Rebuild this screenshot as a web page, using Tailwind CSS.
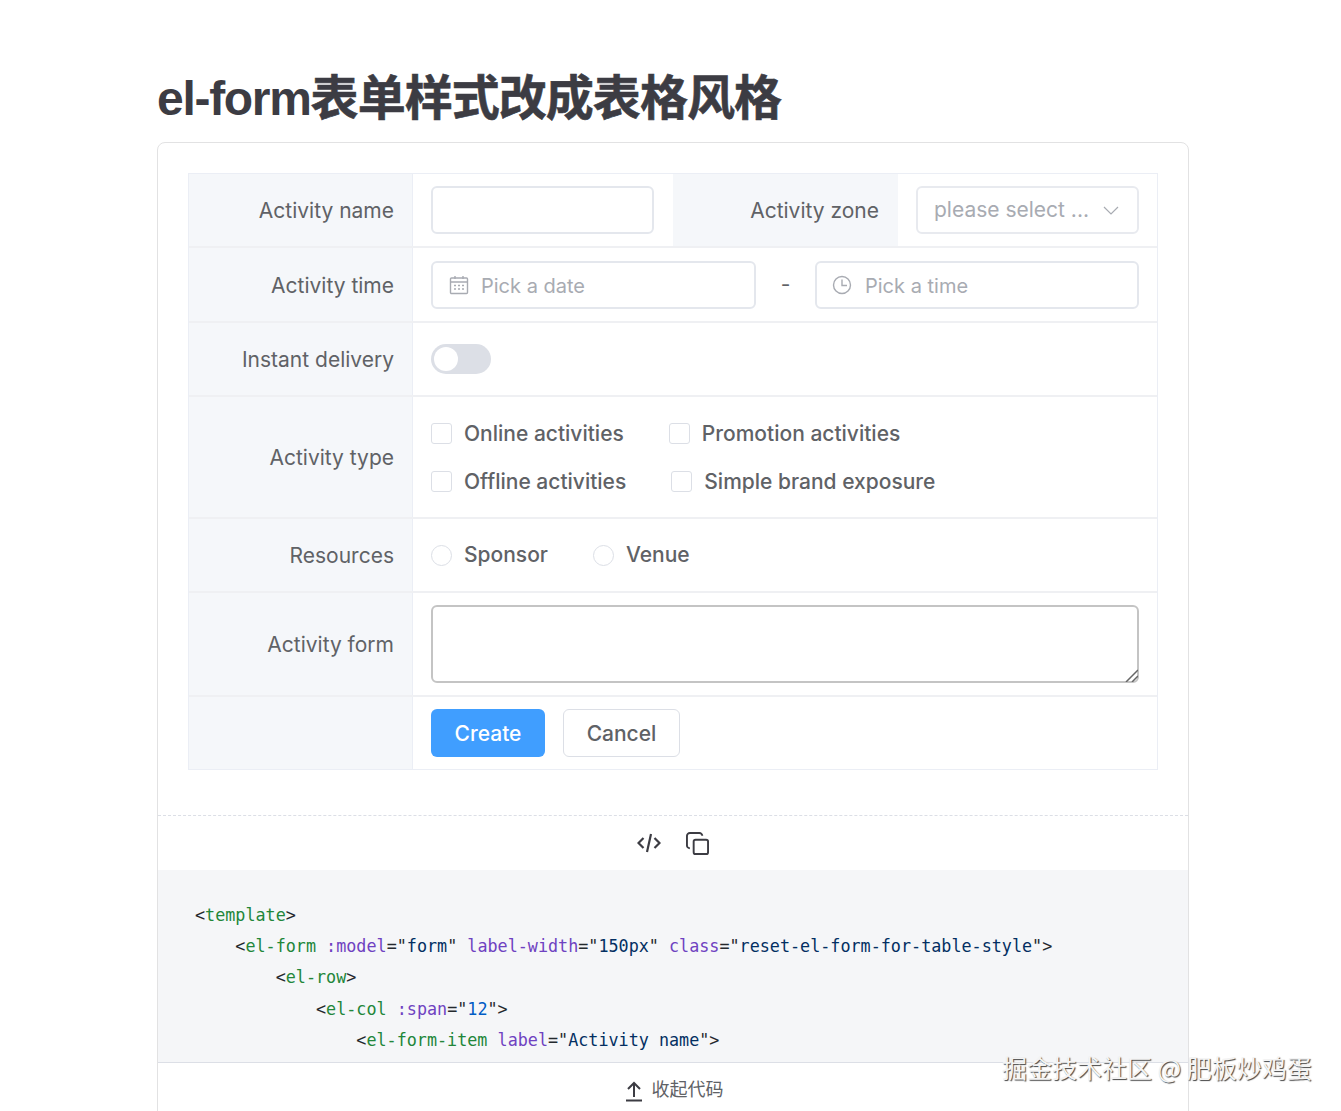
<!DOCTYPE html>
<html lang="zh-CN">
<head>
  <meta charset="UTF-8" />
  <title>el-form表单样式改成表格风格</title>
  <script src="https://cdn.jsdelivr.net/npm/@tailwindcss/browser@4"></script>
</head>
<body class="relative h-[1111px] overflow-hidden bg-white font-['Inter','Noto_Sans_CJK_SC',sans-serif] text-[#606266]">

  <main class="ml-[157px] w-[1032px] pt-[64px]">
    <h1 class="h-[78px] pt-[1px] font-['Liberation_Sans','Noto_Sans_CJK_SC',sans-serif] text-[48px] leading-[68px] font-bold tracking-[-0.02em] text-[#3c3c43]"><span class="tracking-[-0.027em]">el-form</span><span class="[-webkit-text-stroke:0.6px_#3c3c43]">表单样式改成表格风格</span></h1>

    <section class="rounded-t-lg border border-[#e2e2e3]">
      <div class="px-[30px] pt-[30px] pb-[45px]">
        <!-- form rendered as a table -->
        <div class="border border-[#ebeef5] text-[21px]">
          <div class="flex h-[74px] border-b-2 border-[#eff0f3]">
            <div class="flex w-[223px] items-center justify-end bg-[#f5f7fa] pt-[2px] pr-[18px]">Activity name</div>
            <div class="flex w-[261px] items-center border-l border-[#ebeef5] pl-[18px]">
              <div class="h-[48px] w-[223px] rounded-md border-2 border-[#e4e7ed]"></div>
            </div>
            <div class="flex w-[225px] items-center justify-end bg-[#f5f7fa] pt-[2px] pr-[19px]">Activity zone</div>
            <div class="flex flex-1 items-center pl-[18px]">
              <div class="flex h-[48px] w-[223px] items-center justify-between rounded-md border-2 border-[#e8eaef] pr-[18px] pl-[16px] text-[#a8abb2]">
                <span>please select ...</span>
                <svg class="h-[16px] w-[16px]" viewBox="0 0 16 16" fill="none" stroke="#a8abb2" stroke-width="1.2"><path d="M1 5l7 7 7-7" /></svg>
              </div>
            </div>
          </div>

          <div class="flex h-[75px] border-b-2 border-[#eff0f3]">
            <div class="flex w-[223px] items-center justify-end bg-[#f5f7fa] pt-[2px] pr-[18px]">Activity time</div>
            <div class="flex flex-1 items-center border-l border-[#ebeef5] pl-[18px]">
              <div class="flex h-[48px] w-[325px] items-center gap-[12px] rounded-md border-2 border-[#e4e7ed] pl-[16px] text-[20px] text-[#a8abb2]">
                <svg class="h-[20px] w-[20px]" viewBox="0 0 20 20" fill="none" stroke="#a8abb2" stroke-width="1.4">
                  <rect x="1.5" y="3" width="17" height="15.5" rx="1" />
                  <path d="M1.5 7h17M6 1v3M14 1v3" />
                  <path d="M5 10.5h2M9 10.5h2M13 10.5h2M5 14h2M9 14h2M13 14h2" />
                </svg>
                <span class="pt-[2px]">Pick a date</span>
              </div>
              <div class="w-[59px] text-center leading-none">-</div>
              <div class="flex h-[48px] w-[324px] items-center gap-[13px] rounded-md border-2 border-[#e4e7ed] pl-[15px] text-[20px] text-[#a8abb2]">
                <svg class="h-[20px] w-[20px]" viewBox="0 0 20 20" fill="none" stroke="#a8abb2" stroke-width="1.4">
                  <circle cx="10" cy="10" r="8.5" />
                  <path d="M10 4.5V10.5H15" />
                </svg>
                <span class="pt-[2px]">Pick a time</span>
              </div>
            </div>
          </div>

          <div class="flex h-[74px] border-b-2 border-[#eff0f3]">
            <div class="flex w-[223px] items-center justify-end bg-[#f5f7fa] pt-[2px] pr-[18px]">Instant delivery</div>
            <div class="flex flex-1 items-center border-l border-[#ebeef5] pl-[18px]">
              <div class="flex h-[30px] w-[60px] items-center rounded-full bg-[#dcdfe6] pl-[3px]">
                <div class="h-[24px] w-[24px] rounded-full bg-white"></div>
              </div>
            </div>
          </div>

          <div class="flex h-[122px] border-b-2 border-[#eff0f3]">
            <div class="flex w-[223px] items-center justify-end bg-[#f5f7fa] pt-[2px] pr-[18px]">Activity type</div>
            <div class="flex flex-1 flex-col justify-center gap-[18px] border-l border-[#ebeef5] pl-[18px] font-medium">
              <div class="flex h-[30px] items-center">
                <span class="h-[21px] w-[21px] rounded-[3px] border border-[#dcdfe6]"></span>
                <span class="mr-[45px] ml-[12px] pt-[2px]">Online activities</span>
                <span class="h-[21px] w-[21px] rounded-[3px] border border-[#dcdfe6]"></span>
                <span class="ml-[12px] pt-[2px]">Promotion activities</span>
              </div>
              <div class="flex h-[30px] items-center">
                <span class="h-[21px] w-[21px] rounded-[3px] border border-[#dcdfe6]"></span>
                <span class="mr-[45px] ml-[12px] pt-[2px]">Offline activities</span>
                <span class="h-[21px] w-[21px] rounded-[3px] border border-[#dcdfe6]"></span>
                <span class="ml-[12px] pt-[2px]">Simple brand exposure</span>
              </div>
            </div>
          </div>

          <div class="flex h-[74px] border-b-2 border-[#eff0f3]">
            <div class="flex w-[223px] items-center justify-end bg-[#f5f7fa] pt-[2px] pr-[18px]">Resources</div>
            <div class="flex flex-1 items-center border-l border-[#ebeef5] pl-[18px] font-medium">
              <span class="h-[21px] w-[21px] rounded-full border border-[#dcdfe6]"></span>
              <span class="mr-[45px] ml-[12px]">Sponsor</span>
              <span class="h-[21px] w-[21px] rounded-full border border-[#dcdfe6]"></span>
              <span class="ml-[12px]">Venue</span>
            </div>
          </div>

          <div class="flex h-[104px] border-b-2 border-[#eff0f3]">
            <div class="flex w-[223px] items-center justify-end bg-[#f5f7fa] pt-[2px] pr-[18px]">Activity form</div>
            <div class="flex flex-1 items-center border-l border-[#ebeef5] pl-[18px]">
              <div class="relative h-[78px] w-[708px]">
                <textarea class="block h-full w-full resize-none rounded-md border-2 border-[#c4c4c4] bg-white outline-none"></textarea>
                <svg class="absolute right-[1px] bottom-[1px] h-[13px] w-[13px]" viewBox="0 0 13 13" fill="none" stroke-width="1.5">
                  <path d="M1 13L13 1M7 13L13 7" stroke="#666" />
                </svg>
              </div>
            </div>
          </div>

          <div class="flex h-[72px]">
            <div class="w-[223px] bg-[#f5f7fa]"></div>
            <div class="flex flex-1 items-center gap-[18px] border-l border-[#ebeef5] pl-[18px]">
              <button class="h-[48px] w-[114px] rounded-md bg-[#409eff] pt-[2px] font-medium text-white">Create</button>
              <button class="h-[48px] w-[117px] rounded-md border border-[#dcdfe6] pt-[2px] font-medium text-[#606266]">Cancel</button>
            </div>
          </div>
        </div>
      </div>

      <div class="flex h-[55px] items-center justify-center gap-[25px] border-t border-dashed border-[#dcdfe6]">
        <svg class="h-[24px] w-[24px]" viewBox="0 0 24 24" fill="none" stroke="#3c3c43" stroke-width="2.2"><path d="M6.5 7L1.500 12l5 5M17.500 7l5 5-5 5M14 3l-4 18" /></svg>
        <svg class="h-[23px] w-[23px]" viewBox="0 0 24 24" fill="none" stroke="#3c3c43" stroke-width="2">
          <rect x="8" y="8" width="15" height="15" rx="2" />
          <path d="M4 17c-1.6 0-3-1.400-3-3V4c0-1.600 1.400-3 3-3h10c1.600 0 3 1.400 3 3" />
        </svg>
      </div>

      <div class="h-[192px] overflow-hidden bg-[#f5f6f8] pt-[30px] pl-[37px] font-['DejaVu_Sans_Mono',monospace] text-[16.75px] leading-[31.2px] text-[#24292e]">
        <div class="whitespace-pre">&lt;<span class="text-[#22863a]">template</span>&gt;</div>
        <div class="whitespace-pre">    &lt;<span class="text-[#22863a]">el-form</span> <span class="text-[#6f42c1]">:model</span>="<span class="text-[#032f62]">form</span>" <span class="text-[#6f42c1]">label-width</span>="<span class="text-[#032f62]">150px</span>" <span class="text-[#6f42c1]">class</span>="<span class="text-[#032f62]">reset-el-form-for-table-style</span>"&gt;</div>
        <div class="whitespace-pre">        &lt;<span class="text-[#22863a]">el-row</span>&gt;</div>
        <div class="whitespace-pre">            &lt;<span class="text-[#22863a]">el-col</span> <span class="text-[#6f42c1]">:span</span>="<span class="text-[#005cc5]">12</span>"&gt;</div>
        <div class="whitespace-pre">                &lt;<span class="text-[#22863a]">el-form-item</span> <span class="text-[#6f42c1]">label</span>="<span class="text-[#032f62]">Activity name</span>"&gt;</div>
      </div>

      <div class="flex h-[60px] items-start justify-center gap-[9px] border-t border-[#dcdfe6] pt-[14px] pl-[2px] text-[18px] leading-[26px] text-[#606266]">
        <svg class="mt-[3px] h-[22px] w-[18px]" viewBox="0 0 18 22" fill="none" stroke="#3c3c43" stroke-width="2"><path d="M9 17V3M3 9l6-6 6 6M1 20.500h16" /></svg>
        <span>收起代码</span>
      </div>
    </section>
  </main>

  <div class="absolute top-[1052px] left-[1002px] font-['Noto_Sans_CJK_SC',sans-serif] text-[25px] leading-[30px] whitespace-nowrap text-[#f4f4f4] [text-shadow:1px_1px_1px_#444]">掘金技术社区 @ 肥板炒鸡蛋</div>
</body>
</html>
